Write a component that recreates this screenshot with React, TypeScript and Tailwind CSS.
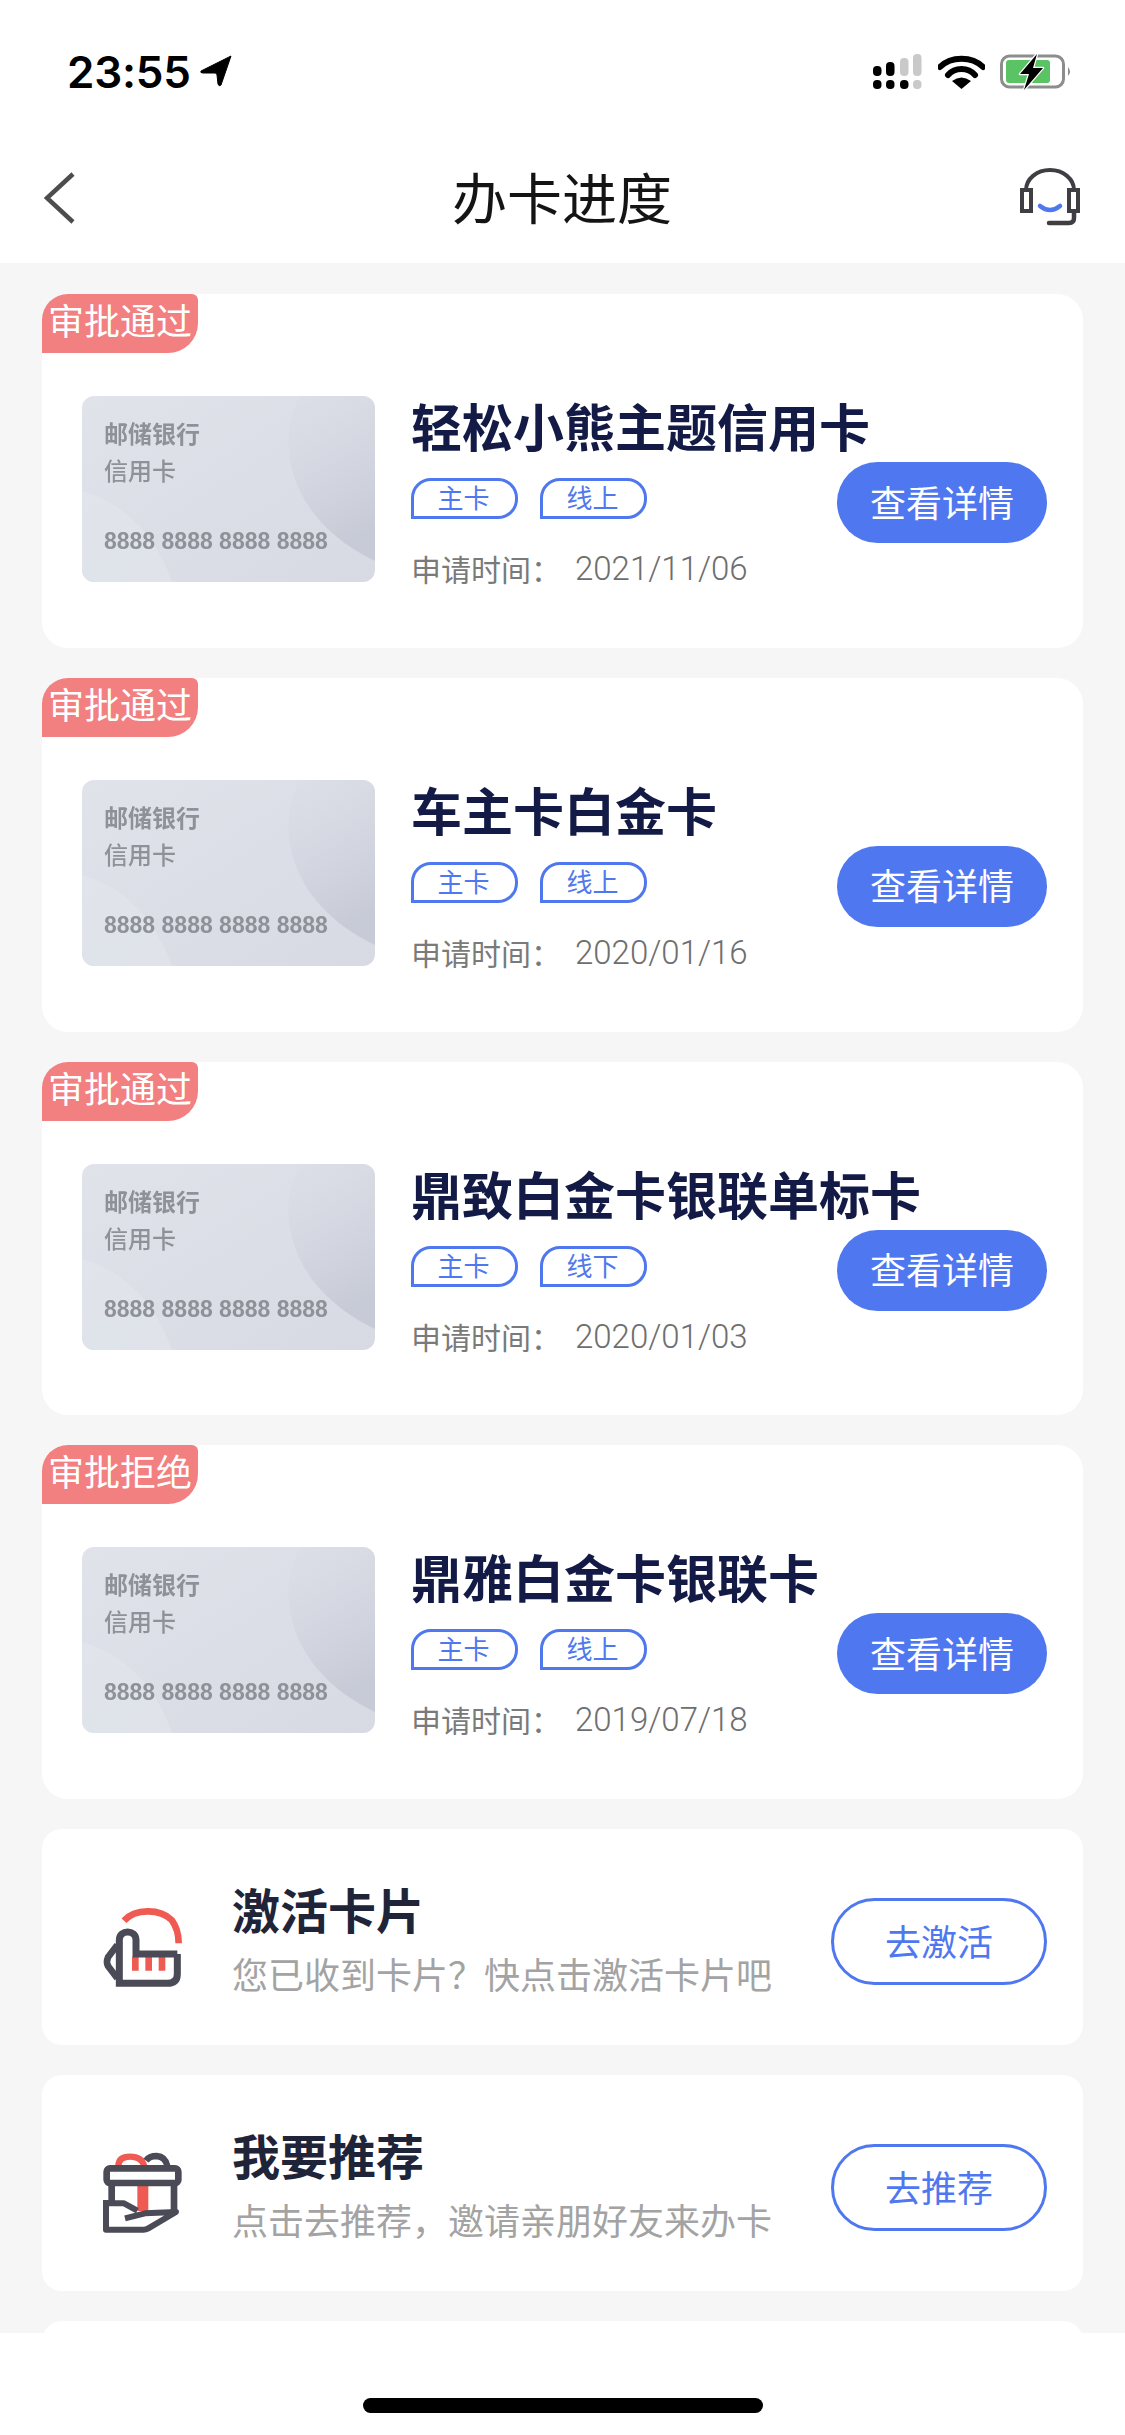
import React from "react";

const cjk = "font-['Noto_Sans_CJK_SC',sans-serif]";

const applications = [
  { status: "审批通过", name: "轻松小熊主题信用卡", channel: "线上", date: "2021/11/06" },
  { status: "审批通过", name: "车主卡白金卡", channel: "线上", date: "2020/01/16" },
  { status: "审批通过", name: "鼎致白金卡银联单标卡", channel: "线下", date: "2020/01/03" },
  { status: "审批拒绝", name: "鼎雅白金卡银联卡", channel: "线上", date: "2019/07/18" },
];

function StatusBar() {
  return (
    <div className="flex h-[112px] items-start justify-between pl-[67px] pr-[53px] pt-[50px]">
      <div className="flex items-center gap-[9px]">
        <span className="font-['Inter',sans-serif] text-[44px] font-semibold leading-[44px] tracking-[-0.2px] text-black">23:55</span>
        <svg width="32" height="32" viewBox="0 0 32 32" className="-mt-[2px]">
          <path d="M31 1 L1 16 Q0 18 3 18 L15 18 Q17 18 17 20 L18 29 Q19 32 21 30 Z" fill="#000" stroke="#000" strokeWidth="1" strokeLinejoin="round" />
        </svg>
      </div>
      <div className="flex items-center gap-[15px] pt-[4px]">
        <svg width="50" height="36" viewBox="0 0 50 36">
          <rect x="0" y="12" width="8.5" height="10" rx="4" fill="#000" />
          <rect x="13" y="8" width="8.5" height="14" rx="4" fill="#000" />
          <rect x="27" y="4" width="8.5" height="18" rx="4" fill="#c9c9c9" />
          <rect x="40" y="0" width="8.5" height="22" rx="4" fill="#c9c9c9" />
          <rect x="0" y="26" width="8.5" height="9" rx="4" fill="#000" />
          <rect x="13" y="26" width="8.5" height="9" rx="4" fill="#000" />
          <rect x="27" y="26" width="8.5" height="9" rx="4" fill="#000" />
          <rect x="40" y="26" width="8.5" height="9" rx="4" fill="#c9c9c9" />
        </svg>
        <svg width="47" height="36" viewBox="0 0 47 36">
          <path d="M2 13 C13 2 34 2 45 13" fill="none" stroke="#000" strokeWidth="6" strokeLinecap="round" />
          <path d="M10 21 C17 13 30 13 37 21" fill="none" stroke="#000" strokeWidth="6" strokeLinecap="round" />
          <path d="M23.5 35 L14 27 Q23.5 20 33 27 Z" fill="#000" />
        </svg>
        <svg width="72" height="36" viewBox="0 0 72 36">
          <rect x="1.5" y="2" width="62" height="31" rx="8" fill="none" stroke="#8d8d8d" strokeWidth="3" />
          <rect x="6" y="6" width="44" height="23" rx="3" fill="#5ac363" />
          <path d="M68 13 Q72 17.5 68 22 Z" fill="#8d8d8d" />
          <path d="M37 0 L20 20 H29 L24 36 L43 14 H33 Z" fill="#000" stroke="#fff" strokeWidth="2.5" strokeLinejoin="round" paintOrder="stroke" />
        </svg>
      </div>
    </div>
  );
}

function NavBar() {
  return (
    <div className="flex h-[151px] items-start justify-between pl-[44px] pr-[45px]">
      <div className="w-[60px]">
        <svg width="32" height="52" viewBox="0 0 32 52" className="mt-[60px]">
          <path d="M29 2 L3 26 L29 50" fill="none" stroke="#4d4d4d" strokeWidth="4.5" />
        </svg>
      </div>
      <h1 className={`${cjk} mt-[51px] text-[55px] font-normal leading-[64px] text-[#141414]`}>办卡进度</h1>
      <svg width="60" height="60" viewBox="0 0 60 60" className="mt-[56px]">
        <path d="M6 21 V23 M54 21 V23 M6 22 A24 20 0 0 1 54 22" fill="none" stroke="#3f3f43" strokeWidth="4" />
        <rect x="2" y="22" width="9" height="21" fill="none" stroke="#3f3f43" strokeWidth="4" />
        <rect x="49" y="22" width="9" height="21" fill="none" stroke="#3f3f43" strokeWidth="4" />
        <path d="M20 38 Q30 46 40 38" fill="none" stroke="#4f78ee" strokeWidth="4.5" strokeLinecap="round" />
        <path d="M54 44 V50 Q54 55 49 55 H29" fill="none" stroke="#3f3f43" strokeWidth="4.5" strokeLinecap="round" />
      </svg>
    </div>
  );
}

function CardFace({ id }: { id: string }) {
  return (
    <div className="relative h-[186px] w-[293px] shrink-0 overflow-hidden rounded-[12px] bg-gradient-to-br from-[#e0e3ea] to-[#d7dae3]">
      <svg width="293" height="186" viewBox="0 0 293 186" className="absolute inset-0">
        <defs>
          <linearGradient id={id} x1="0" y1="0" x2="0.3" y2="1">
            <stop offset="0" stopColor="#d8dbe4" stopOpacity="0.2" />
            <stop offset="1" stopColor="#c6cad6" stopOpacity="0.95" />
          </linearGradient>
        </defs>
        <path d="M0 95 C40 105 75 140 90 186 H0 Z" fill="#e4e7ee" fillOpacity="0.5" />
        <path d="M218 0 C195 40 200 120 293 165 V0 Z" fill={`url(#${id})`} />
      </svg>
      <div className={`${cjk} absolute inset-0 pl-[22px] pt-[23px] text-[#8e9198] blur-[0.5px]`}>
        <p className="text-[24px] font-bold leading-[28px]">邮储银行</p>
        <p className="mt-[9px] text-[24px] font-medium leading-[28px]">信用卡</p>
        <p className="mt-[43px] font-['Liberation_Sans',sans-serif] text-[23px] font-bold leading-[28px]">8888 8888 8888 8888</p>
      </div>
    </div>
  );
}

function Tag({ label }: { label: string }) {
  return (
    <span className={`${cjk} flex h-[41px] w-[107px] items-center justify-center rounded-[20px] rounded-bl-none border-[3px] border-[#4f78ee] pb-[3px] pr-[2px] text-[26px] leading-none text-[#4f78ee]`}>
      {label}
    </span>
  );
}

function ApplicationCard({ status, name, channel, date }: (typeof applications)[number]) {
  return (
    <div className="relative flex h-[353.75px] shrink-0 items-start rounded-[26px] bg-white pl-[40px] pr-[36px] pt-[102px]">
      <div className={`${cjk} absolute left-0 top-0 flex h-[59px] w-[156px] items-center justify-center rounded-tl-[26px] rounded-tr-[6px] rounded-br-[30px] bg-[#f38080] pb-[9px] text-[36px] leading-none text-white`}>
        {status}
      </div>
      <CardFace id={`face-${date}`} />
      <div className="ml-[36px] min-w-0 flex-1 pt-[2px]">
        <h2 className={`${cjk} whitespace-nowrap text-[51px] font-bold leading-[54px] text-[#121a45]`}>{name}</h2>
        <div className="mt-[26px] flex gap-[22px]">
          <Tag label="主卡" />
          <Tag label={channel} />
        </div>
        <p className="mt-[29px] flex h-[40px] items-center whitespace-nowrap text-[#7a7a7a]">
          <span className={`${cjk} text-[30px] leading-[40px]`}>申请时间：</span>
          <span className="ml-[14px] mt-[2px] font-['Roboto',sans-serif] text-[33px] font-light leading-[40px] text-[#6e6e6e]">{date}</span>
        </p>
      </div>
      <button className={`${cjk} mt-[66px] h-[81px] w-[210px] shrink-0 rounded-full bg-[#4f78f0] pb-[4px] text-[36px] leading-none text-white`}>
        查看详情
      </button>
    </div>
  );
}

function ActivateIcon() {
  return (
    <svg width="120" height="120" viewBox="0 0 360 360" className="mt-[71px] shrink-0">
      <path d="M132 62 C165 25 240 25 275 60 C290 80 296 105 296 130" fill="none" stroke="#ef5b52" strokeWidth="20" />
      <path d="M156 170 h20 v42 h-20 z M196 170 h20 v42 h-20 z M236 170 h20 v42 h-20 z" fill="#ef5b52" />
      <path d="M292 162 H168 V120 C168 88 118 88 118 120 V250 H262 Q292 250 292 222 V162" fill="none" stroke="#4b4b57" strokeWidth="21" />
      <path d="M112 135 L84 172 Q78 185 84 198 L112 235" fill="none" stroke="#4b4b57" strokeWidth="20" />
    </svg>
  );
}

function GiftIcon() {
  return (
    <svg width="120" height="120" viewBox="0 18 360 360" className="mt-[71px] shrink-0">
      <path d="M115 78 Q116 50 150 50 Q186 50 192 78" fill="none" stroke="#ef5b52" strokeWidth="19" />
      <path d="M198 62 Q208 48 230 48 Q256 50 262 78" fill="none" stroke="#4b4b57" strokeWidth="19" />
      <rect x="172" y="125" width="33" height="88" fill="#ef5b52" />
      <rect x="80" y="85" width="215" height="44" rx="10" fill="none" stroke="#4b4b57" strokeWidth="20" />
      <path d="M95 130 V190 M282 130 V212" fill="none" stroke="#4b4b57" strokeWidth="20" />
      <path d="M78 190 H132 L172 212 M135 235 L195 220 L288 216 L205 265 Q198 269 190 269 H78 V180" fill="none" stroke="#4b4b57" strokeWidth="18" strokeLinejoin="round" />
    </svg>
  );
}

function ServiceCard({ icon, title, hint, action }: { icon: React.ReactNode; title: string; hint: string; action: string }) {
  return (
    <div className="flex h-[216px] shrink-0 items-start rounded-[20px] bg-white pl-[38px] pr-[36px]">
      {icon}
      <div className={`${cjk} ml-[32px] min-w-0 flex-1 pt-[53px]`}>
        <h3 className="text-[48px] font-bold leading-[52px] text-[#1f2438]">{title}</h3>
        <p className="mt-[19px] whitespace-nowrap text-[36px] leading-[40px] text-[#a3a3a3]">{hint}</p>
      </div>
      <button className={`${cjk} mt-[69px] h-[87px] w-[216px] shrink-0 rounded-full border-[3px] border-[#4f78f0] pb-[4px] text-[36px] leading-none text-[#4f78f0]`}>
        {action}
      </button>
    </div>
  );
}

export default function App() {
  return (
    <div className="flex h-[2435px] w-[1125px] flex-col overflow-hidden bg-[#f6f6f6]">
      <header className="shrink-0 bg-white">
        <StatusBar />
        <NavBar />
      </header>

      <main className="flex min-h-0 flex-1 flex-col gap-[30px] overflow-hidden px-[42px] pt-[31px]">
        {applications.map((a) => (
          <ApplicationCard key={a.name + a.date} {...a} />
        ))}
        <ServiceCard icon={<ActivateIcon />} title="激活卡片" hint="您已收到卡片？快点击激活卡片吧" action="去激活" />
        <ServiceCard icon={<GiftIcon />} title="我要推荐" hint="点击去推荐，邀请亲朋好友来办卡" action="去推荐" />
        <div className="h-[216px] shrink-0 rounded-[20px] bg-white" />
      </main>

      {/* Home indicator */}
      <footer className="flex h-[102px] shrink-0 items-start justify-center bg-white pt-[65px]">
        <div className="h-[15px] w-[400px] rounded-full bg-black" />
      </footer>
    </div>
  );
}
